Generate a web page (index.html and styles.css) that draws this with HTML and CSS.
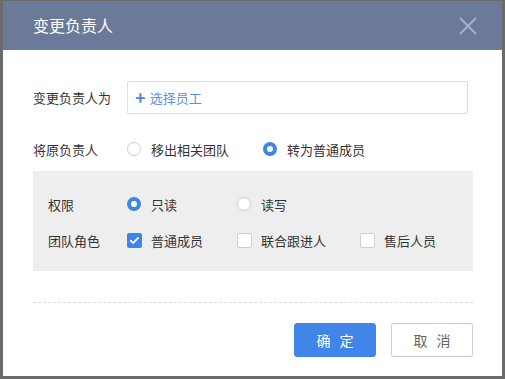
FILE: index.html
```html
<!DOCTYPE html>
<html lang="zh">
<head>
<meta charset="utf-8">
<link rel="stylesheet" href="styles.css">
</head>
<body>
<div class="dialog">
  <div class="header">
    <span class="title">变更负责人</span>
    <svg class="close" width="18" height="18" viewBox="0 0 18 18"><path d="M1 1L17 17M17 1L1 17" stroke="#a7b1c6" stroke-width="2" fill="none"/></svg>
  </div>
  <div class="content">
    <div class="row row-input">
      <span class="label">变更负责人为</span>
      <div class="input"><span class="plus">+</span><span class="pick">选择员工</span></div>
    </div>
    <div class="row row-radio">
      <span class="label">将原负责人</span>
      <label class="opt w136"><span class="radio"></span>移出相关团队</label>
      <label class="opt"><span class="radio on"></span>转为普通成员</label>
    </div>
    <div class="panel">
      <div class="row prow">
        <span class="plabel">权限</span>
        <label class="opt w110"><span class="radio on"></span>只读</label>
        <label class="opt"><span class="radio"></span>读写</label>
      </div>
      <div class="row prow">
        <span class="plabel">团队角色</span>
        <label class="opt w110"><span class="check on"><svg width="15" height="15" viewBox="0 0 15 15"><path d="M3.8 7.6L6.3 10L11.2 4.9" stroke="#fff" stroke-width="1.8" fill="none" stroke-linecap="round" stroke-linejoin="round"/></svg></span>普通成员</label>
        <label class="opt w123"><span class="check"></span>联合跟进人</label>
        <label class="opt"><span class="check"></span>售后人员</label>
      </div>
    </div>
    <div class="divider"></div>
    <div class="actions">
      <button class="btn primary">确 定</button>
      <button class="btn">取 消</button>
    </div>
  </div>
</div>
</body>
</html>
```
FILE: styles.css
```css
html, body {
  margin: 0;
  padding: 0;
}
body {
  background: #6b6b6b;
  width: 505px;
  height: 379px;
  overflow: hidden;
  font-family: "Noto Sans CJK SC", "Noto Sans", sans-serif;
  font-size: 13px;
  color: #333;
}
.dialog {
  margin: 1px 0 0 3px;
  width: 499px;
  height: 375px;
  background: #fff;
  box-sizing: border-box;
}
.header {
  height: 49px;
  background: #6b7a99;
  display: flex;
  align-items: center;
  justify-content: space-between;
  padding: 0 25px 0 30px;
}
.title {
  color: #fff;
  font-size: 16px;
  line-height: 20px;
  margin-top: -1px;
}
.close {
  display: block;
  margin-top: 1px;
}
.content {
  padding: 31px 29px 0 30px;
}
.row {
  display: flex;
  align-items: center;
}
.row-input {
  height: 33px;
}
.label {
  width: 94px;
  flex: none;
}
.input {
  width: 341px;
  height: 33px;
  box-sizing: border-box;
  border: 1px solid #dcdcdc;
  border-radius: 2px;
  display: flex;
  align-items: center;
  padding-left: 7px;
  color: #4a86e8;
}
.plus {
  font-size: 18px;
  font-weight: bold;
  line-height: 20px;
  margin-right: 4px;
  margin-top: -2px;
}
.pick {
  color: #5b8ee6;
}
.row-radio {
  height: 20px;
  margin-top: 25px;
}
.opt {
  display: flex;
  align-items: center;
  flex: none;
}
.w136 { width: 136px; }
.w110 { width: 110px; }
.w123 { width: 123px; }
.radio {
  width: 14px;
  height: 14px;
  box-sizing: border-box;
  border-radius: 50%;
  border: 1px solid #cfcfcf;
  background: #fff;
  margin-right: 10px;
  flex: none;
}
.radio.on {
  border: 4px solid #3f84e8;
}
.check {
  width: 15px;
  height: 15px;
  box-sizing: border-box;
  border-radius: 2px;
  border: 1px solid #cfcfcf;
  background: #fff;
  margin-right: 9px;
  flex: none;
  display: flex;
}
.check.on {
  background: #3f84e8;
  border: none;
}
.panel {
  margin-top: 12px;
  height: 100px;
  background: #eeeeee;
  padding: 23px 0 0 15px;
  box-sizing: border-box;
  display: flex;
  flex-direction: column;
  gap: 16px;
  width: 440px;
}
.prow {
  height: 20px;
}
.plabel {
  width: 79px;
  flex: none;
}
.divider {
  margin-top: 31px;
  width: 440px;
  border-top: 1px dashed #dddddd;
}
.actions {
  margin-top: 20px;
  width: 440px;
  display: flex;
  justify-content: flex-end;
  gap: 15px;
}
.btn {
  width: 82px;
  height: 34px;
  box-sizing: border-box;
  border: 1px solid #cccccc;
  border-radius: 3px;
  background: #fff;
  color: #666;
  font-family: inherit;
  font-size: 14px;
  padding: 0;
  letter-spacing: 3px;
  text-indent: 3px;
}
.btn.primary {
  background: #4285e8;
  border-color: #4285e8;
  color: #fff;
}
```
